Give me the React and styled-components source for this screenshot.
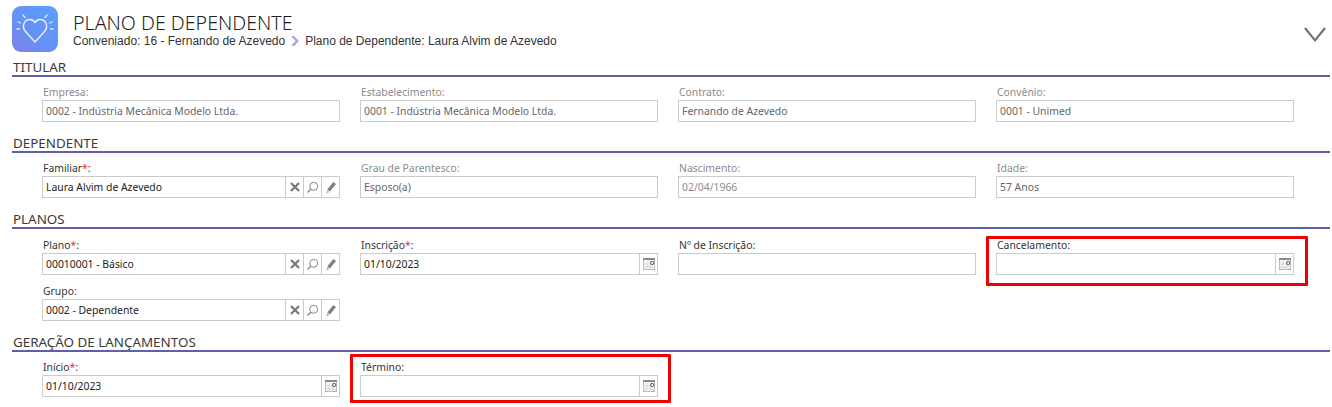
import React from "react";
import styled, { createGlobalStyle } from "styled-components";

const GlobalStyle = createGlobalStyle`
  html, body {
    margin: 0;
    padding: 0;
    background: #fff;
  }
  body {
    font-family: "Noto Sans", "Liberation Sans", sans-serif;
    font-size: 11px;
    overflow: hidden;
  }
`;

function HeartLogo() {
  return (
    <svg width="46" height="46" viewBox="0 0 46 46">
      <defs>
        <linearGradient id="logoBg" x1="0.9" y1="0.1" x2="0.1" y2="1">
          <stop offset="0" stopColor="#5c9dfc" />
          <stop offset="0.6" stopColor="#6690f5" />
          <stop offset="1" stopColor="#8080e6" />
        </linearGradient>
      </defs>
      <rect width="46" height="46" rx="9" fill="url(#logoBg)" />
      <path
        d="M23 36 L13.5 25.5 C9 20 12.5 13.5 18 13.5 C20.5 13.5 22 15 23 16.5 C24 15 25.5 13.5 28 13.5 C33.5 13.5 37 20 32.5 25.5 Z"
        fill="none"
        stroke="#e6eeff"
        strokeWidth="1.5"
        strokeLinejoin="round"
      />
      <g stroke="#e2eaff" strokeWidth="1.3" strokeLinecap="round">
        <path d="M11 9 L13 11.5" />
        <path d="M35 9 L33 11.5" />
        <path d="M6 16 L8.5 17" />
        <path d="M40 16 L37.5 17" />
        <path d="M5 23 L7.5 23" />
        <path d="M41 23 L38.5 23" />
      </g>
    </svg>
  );
}

function BreadcrumbArrow() {
  return (
    <svg width="10" height="12" viewBox="0 0 10 12">
      <path d="M1 1 L4 1 L9 6 L4 11 L1 11 L5.5 6 Z" fill="#a3a8e6" />
    </svg>
  );
}

function CollapseChevron() {
  return (
    <svg width="22" height="15" viewBox="0 0 22 15">
      <path d="M1 1 L11 13.3 L21 1" fill="none" stroke="#707070" strokeWidth="2.1" />
    </svg>
  );
}

function ClearIcon() {
  return (
    <svg width="12" height="12" viewBox="0 0 12 12">
      <path d="M2 2 L10 10 M10 2 L2 10" stroke="#777" strokeWidth="2.2" />
    </svg>
  );
}

function SearchIcon() {
  return (
    <svg width="13" height="13" viewBox="0 0 13 13">
      <circle cx="7.7" cy="5.3" r="4" fill="none" stroke="#868686" strokeWidth="1" />
      <path d="M4.8 8.2 L1.5 11.5" stroke="#868686" strokeWidth="1.3" />
    </svg>
  );
}

function PencilIcon() {
  return (
    <svg width="12" height="13" viewBox="0 0 12 13">
      <path d="M8.3 1 L11 3 L5 10.5 L2.2 8.5 Z" fill="#808080" />
      <path d="M2 9.3 L4.4 11 L1.4 12.4 Z" fill="#a8a8a8" />
    </svg>
  );
}

function CalendarIcon() {
  return (
    <svg width="12" height="12" viewBox="0 0 12 12">
      <rect x="0.5" y="0.5" width="11" height="11" fill="#f6f6f6" stroke="#b4b4b4" />
      <rect x="0" y="0" width="12" height="2" fill="#8a8a8a" />
      <path d="M4 3 V12 M7.5 3 V12 M0 6 H8 M0 9 H12" stroke="#d8d8d8" strokeWidth="1" />
      <circle cx="9.2" cy="5" r="1.6" fill="#fff" stroke="#555" strokeWidth="1" />
    </svg>
  );
}

function Field({ label, value, required, readOnly, faded, kind, mark }) {
  return (
    <FieldBox>
      <FieldLabel $readOnly={readOnly}>
        {label}
        {required && <Required>*</Required>}:
      </FieldLabel>
      <InputBox>
        <InputText $readOnly={readOnly} $faded={faded}>{value}</InputText>
        {kind === "lookup" && (
          <>
            <Addon><ClearIcon /></Addon>
            <Addon><SearchIcon /></Addon>
            <Addon><PencilIcon /></Addon>
          </>
        )}
        {kind === "date" && (
          <Addon><CalendarIcon /></Addon>
        )}
      </InputBox>
      {mark && <RedMark $top={mark.top} $right={mark.right} $bottom={mark.bottom} />}
    </FieldBox>
  );
}

function App() {
  return (
    <Page>
      <GlobalStyle />
      <Header>
        <HeartLogo />
        <HeaderText>
          <PageTitle>PLANO DE DEPENDENTE</PageTitle>
          <Breadcrumb>
            <span>Conveniado: 16 - Fernando de Azevedo</span>
            <BreadcrumbArrow />
            <span>Plano de Dependente: Laura Alvim de Azevedo</span>
          </Breadcrumb>
        </HeaderText>
        <Collapse>
          <CollapseChevron />
        </Collapse>
      </Header>

      <Section>
        <SectionTitle>TITULAR</SectionTitle>
        <FieldGrid>
          <Field readOnly label="Empresa" value="0002 - Indústria Mecânica Modelo Ltda." />
          <Field readOnly label="Estabelecimento" value="0001 - Indústria Mecânica Modelo Ltda." />
          <Field readOnly label="Contrato" value="Fernando de Azevedo" />
          <Field readOnly label="Convênio" value="0001 - Unimed" />
        </FieldGrid>
      </Section>

      <Section>
        <SectionTitle>DEPENDENTE</SectionTitle>
        <FieldGrid>
          <Field required label="Familiar" value="Laura Alvim de Azevedo" kind="lookup" />
          <Field readOnly label="Grau de Parentesco" value="Esposo(a)" />
          <Field readOnly faded label="Nascimento" value="02/04/1966" />
          <Field readOnly label="Idade" value="57 Anos" />
        </FieldGrid>
      </Section>

      <Section>
        <SectionTitle>PLANOS</SectionTitle>
        <FieldGrid $pad={9}>
          <Field required label="Plano" value="00010001 - Básico" kind="lookup" />
          <Field required label="Inscrição" value="01/10/2023" kind="date" />
          <Field label="Nº de Inscrição" value="" />
          <Field label="Cancelamento" value="" kind="date" mark={{ top: -2, right: -14, bottom: -2 }} />
          <Field label="Grupo" value="0002 - Dependente" kind="lookup" />
        </FieldGrid>
      </Section>

      <Section>
        <SectionTitle>GERAÇÃO DE LANÇAMENTOS</SectionTitle>
        <FieldGrid>
          <Field required label="Início" value="01/10/2023" kind="date" />
          <Field label="Término" value="" kind="date" mark={{ top: -6, right: -13, bottom: 3 }} />
        </FieldGrid>
      </Section>
    </Page>
  );
}

export default App;

const Page = styled.div`
  width: 1332px;
  height: 407px;
  box-sizing: border-box;
  padding: 6px 2px 0 12px;
  color: #333;
`;

const Header = styled.div`
  display: flex;
  align-items: flex-start;
  height: 54px;
`;

const HeaderText = styled.div`
  margin-left: 15px;
  padding-top: 6px;
`;

const PageTitle = styled.div`
  font-family: "Noto Sans", sans-serif;
  font-weight: 300;
  font-size: 19.6px;
  line-height: 22px;
  color: #1f1f1f;
`;

const Breadcrumb = styled.div`
  display: flex;
  align-items: center;
  gap: 5px;
  font-family: "Liberation Sans", Arial, sans-serif;
  font-size: 12px;
  line-height: 14px;
  color: #333;
`;

const Collapse = styled.div`
  margin-left: auto;
  padding: 21px 4px 0 0;
`;

const Section = styled.section`
  margin-bottom: 5px;
`;

const SectionTitle = styled.div`
  font-family: "Noto Sans", sans-serif;
  font-size: 13.4px;
  line-height: 15px;
  padding: 0 0 0 1px;
  border-bottom: 2px solid #5f5fae;
  color: #3a3a3a;
`;

const FieldGrid = styled.div`
  display: grid;
  grid-template-columns: repeat(4, 298px);
  column-gap: 20px;
  row-gap: 0;
  padding: ${({ $pad }) => $pad ?? 8}px 0 0 30px;
`;

const FieldBox = styled.div`
  position: relative;
  height: 46px;
`;

const RedMark = styled.div`
  position: absolute;
  top: ${({ $top }) => $top}px;
  left: -10px;
  right: ${({ $right }) => $right}px;
  bottom: ${({ $bottom }) => $bottom}px;
  border: 3px solid #f00000;
  border-radius: 1px;
  pointer-events: none;
`;

const FieldLabel = styled.div`
  font-size: 10.4px;
  line-height: 14px;
  padding-left: 1px;
  margin-bottom: 1px;
  color: ${({ $readOnly }) => ($readOnly ? "#8a8a8a" : "#333")};
`;

const Required = styled.span`
  color: #e83030;
`;

const InputBox = styled.div`
  display: flex;
  height: 22px;
  box-sizing: border-box;
  border: 1px solid #cbcbcb;
  background: #fff;
`;

const InputText = styled.div`
  flex: 1;
  padding-left: 3px;
  font-size: 10.4px;
  line-height: 20px;
  color: ${({ $readOnly, $faded }) => ($faded ? "#8c8c8c" : $readOnly ? "#666" : "#222")};
`;

const Addon = styled.div`
  width: 17px;
  display: flex;
  align-items: center;
  justify-content: center;
  border-left: 1px solid #cbcbcb;
`;
